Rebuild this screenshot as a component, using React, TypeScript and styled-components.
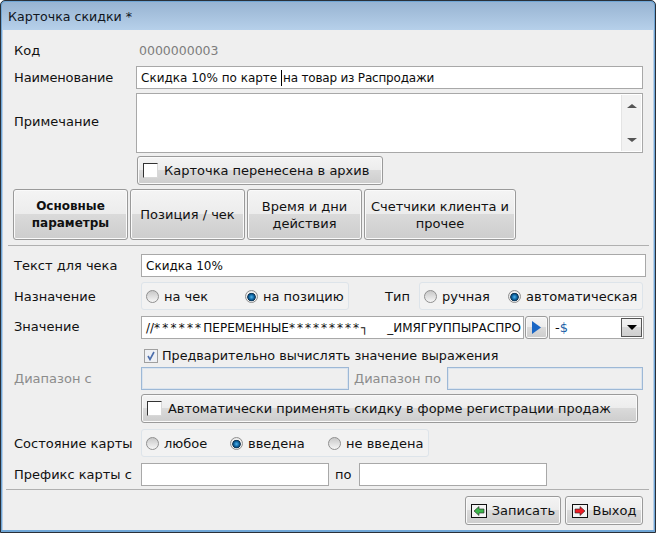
import React from 'react';
import styled, { createGlobalStyle } from 'styled-components';

const GlobalStyle = createGlobalStyle`
  html, body { margin: 0; padding: 0; background: #fff; }
  body { font-family: 'DejaVu Sans', Verdana, sans-serif; font-size: 13px; color: #111; }
`;

const Window = styled.div`
  width: 656px;
  height: 533px;
  box-sizing: border-box;
  border: 1px solid #2a3038;
  border-radius: 5px 5px 0 0;
  background: #6fa6d6;
  padding: 1px 1px 2px;
  display: flex;
  flex-direction: column;
  overflow: hidden;
`;

const TitleBar = styled.div`
  height: 28px;
  flex: none;
  padding-left: 6px;
  display: flex;
  align-items: center;
  font-size: 12.6px;
  color: #10151c;
  background: linear-gradient(#98b4d2, #b6d0ea);
  border-radius: 4px 4px 0 0;
`;

const Body = styled.div`
  flex: 1;
  background: #efefef;
  display: flex;
  flex-direction: column;
  border-left: 1px solid #b9cfe6;
  border-right: 1px solid #b9cfe6;
`;

const Row = styled.div<{ $top: number; $left?: number; $height?: number }>`
  display: flex;
  align-items: center;
  flex: none;
  margin-top: ${({ $top }) => $top}px;
  padding-left: ${({ $left }) => $left ?? 11}px;
  height: ${({ $height }) => $height ?? 23}px;
`;

const Label = styled.div<{ $width: number; $muted?: boolean; $lift?: number; $inset?: number; $tight?: boolean }>`
  width: ${({ $width }) => $width}px;
  flex: none;
  box-sizing: border-box;
  white-space: nowrap;
  padding-left: ${({ $inset }) => $inset ?? 0}px;
  padding-bottom: ${({ $lift }) => $lift ?? 0}px;
  letter-spacing: ${({ $tight }) => ($tight ? '-0.15px' : 'normal')};
  color: ${({ $muted }) => ($muted ? '#8c8c8c' : '#111')};
`;

const CodeValue = styled.div`
  color: #7d7d7d;
  padding-left: 3px;
  font-size: 12.5px;
`;

const Field = styled.div<{ $width: number; $disabled?: boolean }>`
  width: ${({ $width }) => $width}px;
  height: 100%;
  flex: none;
  box-sizing: border-box;
  border: 1px solid ${({ $disabled }) => ($disabled ? '#9db8d6' : '#a8a8a8')};
  box-shadow: ${({ $disabled }) => ($disabled ? 'inset 0 0 0 1px #dbe4ee' : 'none')};
  background: ${({ $disabled }) => ($disabled ? '#efefef' : '#fff')};
  display: flex;
  align-items: center;
  padding: 1px 0 0 4px;
  font-size: 12px;
  white-space: pre;
  overflow: hidden;
  color: #0c0c0c;
`;

const Caret = styled.span`
  display: inline-block;
  width: 1px;
  height: 16px;
  background: #000;
`;

const TightText = styled.span`
  letter-spacing: -0.2px;
  margin-left: 1px;
`;

const NoteBox = styled.div`
  width: 507px;
  height: 60px;
  box-sizing: border-box;
  border: 1px solid #a8a8a8;
  background: #fff;
  display: flex;
  justify-content: flex-end;
  padding: 1px;
`;

const ScrollBar = styled.div`
  width: 20px;
  background: #f2f2f2;
  border-left: 1px solid #e4e4e4;
  display: flex;
  flex-direction: column;
  justify-content: space-between;
  align-items: center;
  padding: 9px 0 9px;
  box-sizing: border-box;
`;

const Arrow = styled.div<{ $down?: boolean }>`
  width: 0;
  height: 0;
  border-left: 5px solid transparent;
  border-right: 5px solid transparent;
  ${({ $down }) => ($down ? 'border-top: 4px solid #555;' : 'border-bottom: 4px solid #555;')}
`;

const PlainButton = styled.div<{ $width: number; $height?: number; $bold?: boolean; $size?: number }>`
  width: ${({ $width }) => $width}px;
  height: ${({ $height }) => $height ?? 29}px;
  flex: none;
  box-sizing: border-box;
  border: 1px solid #9a9a9a;
  border-radius: 3px;
  box-shadow: inset 0 0 0 1px #fafafa;
  background: linear-gradient(#f4f4f4 0, #ececec 49%, #dadada 50%, #cdcdcd 100%);
  display: flex;
  align-items: center;
  font-size: ${({ $size }) => $size ?? 13}px;
  font-weight: ${({ $bold }) => ($bold ? 700 : 400)};
  color: #111;
`;

const TabButton = styled(PlainButton)`
  justify-content: center;
  text-align: center;
  line-height: 17px;
  padding: 0 4px;
`;

const CheckButton = styled(PlainButton)`
  padding-left: 5px;
  gap: 6px;
`;

const Box = styled.div`
  width: 13px;
  height: 13px;
  flex: none;
  border: 1px solid #333;
  border-right-color: #d8d8d8;
  border-bottom-color: #d8d8d8;
  background: #fff;
`;

const TabRow = styled.div`
  display: flex;
  gap: 2px;
  margin-top: 4px;
  padding-left: 10px;
  flex: none;
`;

const Divider = styled.div<{ $top: number; $left: number; $right: number }>`
  height: 1px;
  flex: none;
  background: #b0b0b0;
  margin: ${({ $top }) => $top}px ${({ $right }) => $right}px 0 ${({ $left }) => $left}px;
`;

const RadioGroup = styled.div<{ $width: number }>`
  width: ${({ $width }) => $width}px;
  height: 28px;
  flex: none;
  box-sizing: border-box;
  border: 1px solid #dde4ea;
  border-radius: 3px;
  background: #f2f2f2;
  display: flex;
  align-items: center;
  padding-left: 4px;
`;

const RadioItem = styled.div<{ $width: number }>`
  width: ${({ $width }) => $width}px;
  flex: none;
  display: flex;
  align-items: center;
  gap: 5px;
  white-space: nowrap;
`;

const RadioMark = styled.div<{ $on?: boolean }>`
  width: 13px;
  height: 13px;
  flex: none;
  box-sizing: border-box;
  border-radius: 50%;
  border: 1px solid #8f8f8f;
  background: ${({ $on }) =>
    $on
      ? 'radial-gradient(circle at 50% 55%, #4fb4ee 0, #0a5f9c 32%, #10324f 48%, #f0f0f0 56%, #d8d8d8 100%)'
      : 'linear-gradient(#c8c8c8, #f6f6f6)'};
`;

const Stars = styled.span<{ $spread: number }>`
  letter-spacing: ${({ $spread }) => $spread}px;
`;

const PlayButton = styled(PlainButton)`
  justify-content: center;
  margin: 0 1px;
`;

const SelectText = styled.div`
  flex: 1;
  padding-left: 2px;
  font-size: 13px;
`;

const DollarSign = styled.span`
  color: #1c5fa8;
`;

const SelectHandle = styled.div`
  width: 21px;
  height: 19px;
  box-sizing: border-box;
  border: 1px solid #555;
  background: linear-gradient(#f2f2f2 0, #ececec 49%, #d8d8d8 50%, #cfcfcf 100%);
  display: flex;
  align-items: center;
  justify-content: center;
  margin-right: 1px;
`;

const SelectArrow = styled.div`
  width: 0;
  height: 0;
  border-left: 5px solid transparent;
  border-right: 5px solid transparent;
  border-top: 5px solid #000;
`;

const SelectField = styled(Field)`
  padding: 0 0 0 3px;
`;

const CheckLine = styled.div`
  display: flex;
  align-items: center;
  gap: 4px;
  margin-top: 9px;
  padding-left: 141px;
  height: 15px;
  flex: none;
  font-size: 12.75px;
`;

const TickBox = styled.div`
  width: 14px;
  height: 14px;
  box-sizing: border-box;
  border: 1px solid #a0a0a0;
  background: #eef0f4;
  display: flex;
  align-items: center;
  justify-content: center;
`;

const Footer = styled.div`
  display: flex;
  justify-content: flex-end;
  gap: 4px;
  padding: 6px 10px 0 0;
`;

const FooterButton = styled(PlainButton)`
  justify-content: center;
  gap: 5px;
`;

const DoorIcon = ({ fill, flip }: { fill: string; flip?: boolean }) => (
  <svg width="16" height="14" viewBox="0 0 16 14">
    <rect x="0.5" y="0.5" width="15" height="13" fill="#f4f4f4" stroke="#111" />
    <path
      d={flip ? 'M3 7 L8 2.5 V5 H13 V9 H8 V11.5 Z' : 'M13 7 L8 2.5 V5 H3 V9 H8 V11.5 Z'}
      fill={fill}
      stroke="#222"
      strokeWidth="0.6"
    />
  </svg>
);

const App = () => (
  <>
    <GlobalStyle />
    <Window>
      <TitleBar>Карточка скидки *</TitleBar>
      <Body>
        <Row $top={9} $height={23}>
          <Label $width={122}>Код</Label>
          <CodeValue>0000000003</CodeValue>
        </Row>
        <Row $top={4} $height={23}>
          <Label $width={122} $tight>
            Наименование
          </Label>
          <Field $width={507}>
            Скидка 10% по карте <Caret />
            <TightText>на товар из Распродажи</TightText>
          </Field>
        </Row>
        <Row $top={4} $height={60}>
          <Label $width={122} $lift={4}>
            Примечание
          </Label>
          <NoteBox>
            <ScrollBar>
              <Arrow />
              <Arrow $down />
            </ScrollBar>
          </NoteBox>
        </Row>
        <Row $top={3} $left={134} $height={29}>
          <CheckButton $width={246}>
            <Box />
            Карточка перенесена в архив
          </CheckButton>
        </Row>
        <TabRow>
          <TabButton $width={115} $height={51} $bold $size={12}>
            Основные
            <br />
            параметры
          </TabButton>
          <TabButton $width={115} $height={51}>
            Позиция / чек
          </TabButton>
          <TabButton $width={115} $height={51}>
            Время и дни
            <br />
            действия
          </TabButton>
          <TabButton $width={152} $height={51}>
            Счетчики клиента и
            <br />
            прочее
          </TabButton>
        </TabRow>
        <Divider $top={5} $left={5} $right={4} />
        <Row $top={8} $height={23}>
          <Label $width={127}>Текст для чека</Label>
          <Field $width={505}>Скидка 10%</Field>
        </Row>
        <Row $top={5} $height={28}>
          <Label $width={127}>Назначение</Label>
          <RadioGroup $width={208}>
            <RadioItem $width={99}>
              <RadioMark />
              на чек
            </RadioItem>
            <RadioItem $width={100}>
              <RadioMark $on />
              на позицию
            </RadioItem>
          </RadioGroup>
          <Label $width={70} $inset={36}>
            Тип
          </Label>
          <RadioGroup $width={224}>
            <RadioItem $width={84}>
              <RadioMark />
              ручная
            </RadioItem>
            <RadioItem $width={130}>
              <RadioMark $on />
              автоматическая
            </RadioItem>
          </RadioGroup>
        </Row>
        <Row $top={6} $height={23}>
          <Label $width={127} $lift={2}>
            Значение
          </Label>
          <Field $width={383}>
            //<Stars $spread={2.2}>******</Stars>ПЕРЕМЕННЫЕ<Stars $spread={2}>*********</Stars>
            {'┐     _ИМЯГРУППЫРАСПРО'}
          </Field>
          <PlayButton $width={23} $height={23}>
            <svg width="9" height="13" viewBox="0 0 9 13">
              <path d="M0 0 L9 6.5 L0 13 Z" fill="#1a66c4" />
            </svg>
          </PlayButton>
          <SelectField $width={95}>
            <SelectText>
              -<DollarSign>$</DollarSign>
            </SelectText>
            <SelectHandle>
              <SelectArrow />
            </SelectHandle>
          </SelectField>
        </Row>
        <CheckLine>
          <TickBox>
            <svg width="10" height="10" viewBox="0 0 10 10">
              <path d="M2 5 L4 8.5 L8 1" fill="none" stroke="#4a6cab" strokeWidth="1.6" />
            </svg>
          </TickBox>
          Предварительно вычислять значение выражения
        </CheckLine>
        <Row $top={4} $height={23}>
          <Label $width={127} $muted>
            Диапазон с
          </Label>
          <Field $width={208} $disabled />
          <Label $width={98} $muted $inset={5}>
            Диапазон по
          </Label>
          <Field $width={196} $disabled />
        </Row>
        <Row $top={4} $left={138} $height={29}>
          <CheckButton $width={497} $size={12.9}>
            <Box />
            Автоматически применять скидку в форме регистрации продаж
          </CheckButton>
        </Row>
        <Row $top={6} $height={28}>
          <Label $width={127}>Состояние карты</Label>
          <RadioGroup $width={288}>
            <RadioItem $width={84}>
              <RadioMark />
              любое
            </RadioItem>
            <RadioItem $width={98}>
              <RadioMark $on />
              введена
            </RadioItem>
            <RadioItem $width={98}>
              <RadioMark />
              не введена
            </RadioItem>
          </RadioGroup>
        </Row>
        <Row $top={6} $height={23}>
          <Label $width={127}>Префикс карты с</Label>
          <Field $width={188} />
          <Label $width={30} $inset={6}>
            по
          </Label>
          <Field $width={188} />
        </Row>
        <Divider $top={3} $left={3} $right={4} />
        <Footer>
          <FooterButton $width={96}>
            <DoorIcon fill="#3cb54a" flip />
            Записать
          </FooterButton>
          <FooterButton $width={78}>
            <DoorIcon fill="#ee1c25" />
            Выход
          </FooterButton>
        </Footer>
      </Body>
    </Window>
  </>
);

export default App;
